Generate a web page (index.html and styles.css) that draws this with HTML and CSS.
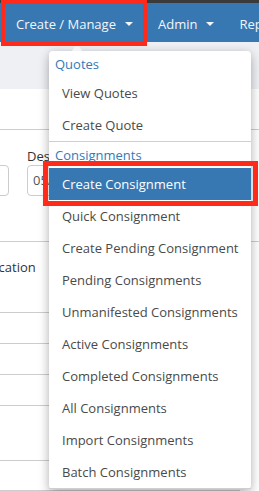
FILE: index.html
```html
<!DOCTYPE html>
<html lang="en">
<head>
  <meta charset="UTF-8">
  <meta name="viewport" content="width=device-width, initial-scale=1.0">
  <title>Create / Manage</title>
  <link rel="stylesheet" href="styles.css">
</head>
<body>
  <div class="topbar"></div>
  <nav class="navbar">
    <a class="nav-link">Create / Manage <span class="caret"></span></a>
    <a class="nav-link">Admin <span class="caret"></span></a>
    <a class="nav-link">Reports</a>
  </nav>
  <div class="subbar"></div>

  <div class="content">
    <div class="row row-top"></div>
    <div class="row form-row">
      <div class="field field-wide">
        <label>&nbsp;</label>
        <div class="input"></div>
      </div>
      <div class="field field-clip">
        <label>Despatch Date</label>
        <div class="input">05/06/2021</div>
      </div>
    </div>
    <div class="table">
      <div class="row thead"><span class="th">Location</span></div>
      <div class="row trow"></div>
      <div class="row trow"></div>
      <div class="row trow"></div>
      <div class="row trow tall"></div>
      <div class="row trow short"></div>
    </div>
  </div>

  <ul class="dropdown">
    <li class="dropdown-header">Quotes</li>
    <li class="dropdown-item">View Quotes</li>
    <li class="dropdown-item">Create Quote</li>
    <li class="divider"></li>
    <li class="dropdown-header">Consignments</li>
    <li class="dropdown-item active">Create Consignment</li>
    <li class="dropdown-item">Quick Consignment</li>
    <li class="dropdown-item">Create Pending Consignment</li>
    <li class="dropdown-item">Pending Consignments</li>
    <li class="dropdown-item">Unmanifested Consignments</li>
    <li class="dropdown-item">Active Consignments</li>
    <li class="dropdown-item">Completed Consignments</li>
    <li class="dropdown-item">All Consignments</li>
    <li class="dropdown-item">Import Consignments</li>
    <li class="dropdown-item">Batch Consignments</li>
    <li class="divider"></li>
  </ul>

  <!-- annotation boxes -->
  <div class="mark mark-nav"></div>
  <div class="mark mark-item"></div>
</body>
</html>
```

FILE: styles.css
```css
body {
  margin: 0;
  width: 259px;
  height: 491px;
  overflow: hidden;
  position: relative;
  background: #fff;
  color: #333;
  font-family: "Open Sans", "Liberation Sans", sans-serif;
  font-size: 13px;
}
.topbar {
  height: 3px;
  background: #3a3a3a;
}
.navbar {
  display: flex;
  height: 39px;
  padding-left: 1px;
  background: #3878b2;
  white-space: nowrap;
  overflow: hidden;
}
.nav-link {
  display: flex;
  align-items: center;
  gap: 9px;
  padding: 3px 12px 0 15px;
  color: #f2f6fa;
  font-size: 13px;
}
.nav-link + .nav-link {
  padding-left: 13px;
}
.caret {
  width: 0;
  height: 0;
  border-top: 4px solid #f2f6fa;
  border-left: 4px solid transparent;
  border-right: 4px solid transparent;
}
.subbar {
  height: 47px;
  background: #eef0f4;
}
.content {
  margin-left: -60px;
}
.row {
  border-bottom: 1px solid #cdcdcd;
  box-sizing: border-box;
}
.row-top {
  height: 41px;
}
.form-row {
  display: flex;
  gap: 18px;
  height: 112px;
  padding-top: 17px;
}
.field {
  display: flex;
  flex-direction: column;
  width: 130px;
}
.field-wide {
  width: 69px;
}
/* the rest of this field sits under the open menu */
.field-clip {
  width: 22px;
  overflow: hidden;
}
.field-clip .input {
  width: 130px;
}
.field label {
  line-height: 18px;
  white-space: nowrap;
}
.input {
  height: 31px;
  box-sizing: border-box;
  padding: 0 5px;
  border: 1px solid #ccc;
  border-radius: 4px;
  line-height: 29px;
  color: #555;
  white-space: nowrap;
}
.table {
  width: 300px;
}
.thead {
  height: 71px;
  padding: 16px 0 0 44px;
  line-height: 18px;
}
.trow {
  height: 31px;
}
.trow.tall {
  height: 55px;
}
.trow.short {
  height: 30px;
}
.dropdown {
  position: absolute;
  left: 49px;
  top: 51px;
  width: 202px;
  margin: 0;
  padding: 0;
  list-style: none;
  background: #fff;
  border-radius: 4px;
  box-shadow: 0 6px 12px rgba(0, 0, 0, 0.22), 0 0 8px rgba(0, 0, 0, 0.12);
}
.dropdown::before {
  content: "";
  position: absolute;
  left: 23px;
  top: -8px;
  border-bottom: 8px solid #f4f4f4;
  border-left: 5px solid transparent;
  border-right: 5px solid transparent;
}
.dropdown-header {
  height: 26px;
  line-height: 26px;
  padding: 0 6px;
  color: #337ab7;
}
.dropdown-item {
  height: 32px;
  line-height: 32px;
  padding: 0 13px;
  color: #4a4a4a;
  white-space: nowrap;
}
.dropdown-item.active {
  background: #3878b2;
  color: #fff;
}
.divider {
  height: 1px;
  background: #cfcfcf;
}
.mark {
  position: absolute;
  box-sizing: border-box;
  border: 4px solid #ff2a1a;
}
.mark-nav {
  left: 1px;
  top: 0;
  width: 146px;
  height: 46px;
}
.mark-item {
  left: 43px;
  top: 161px;
  width: 215px;
  height: 45px;
  border-width: 5px;
}
```
